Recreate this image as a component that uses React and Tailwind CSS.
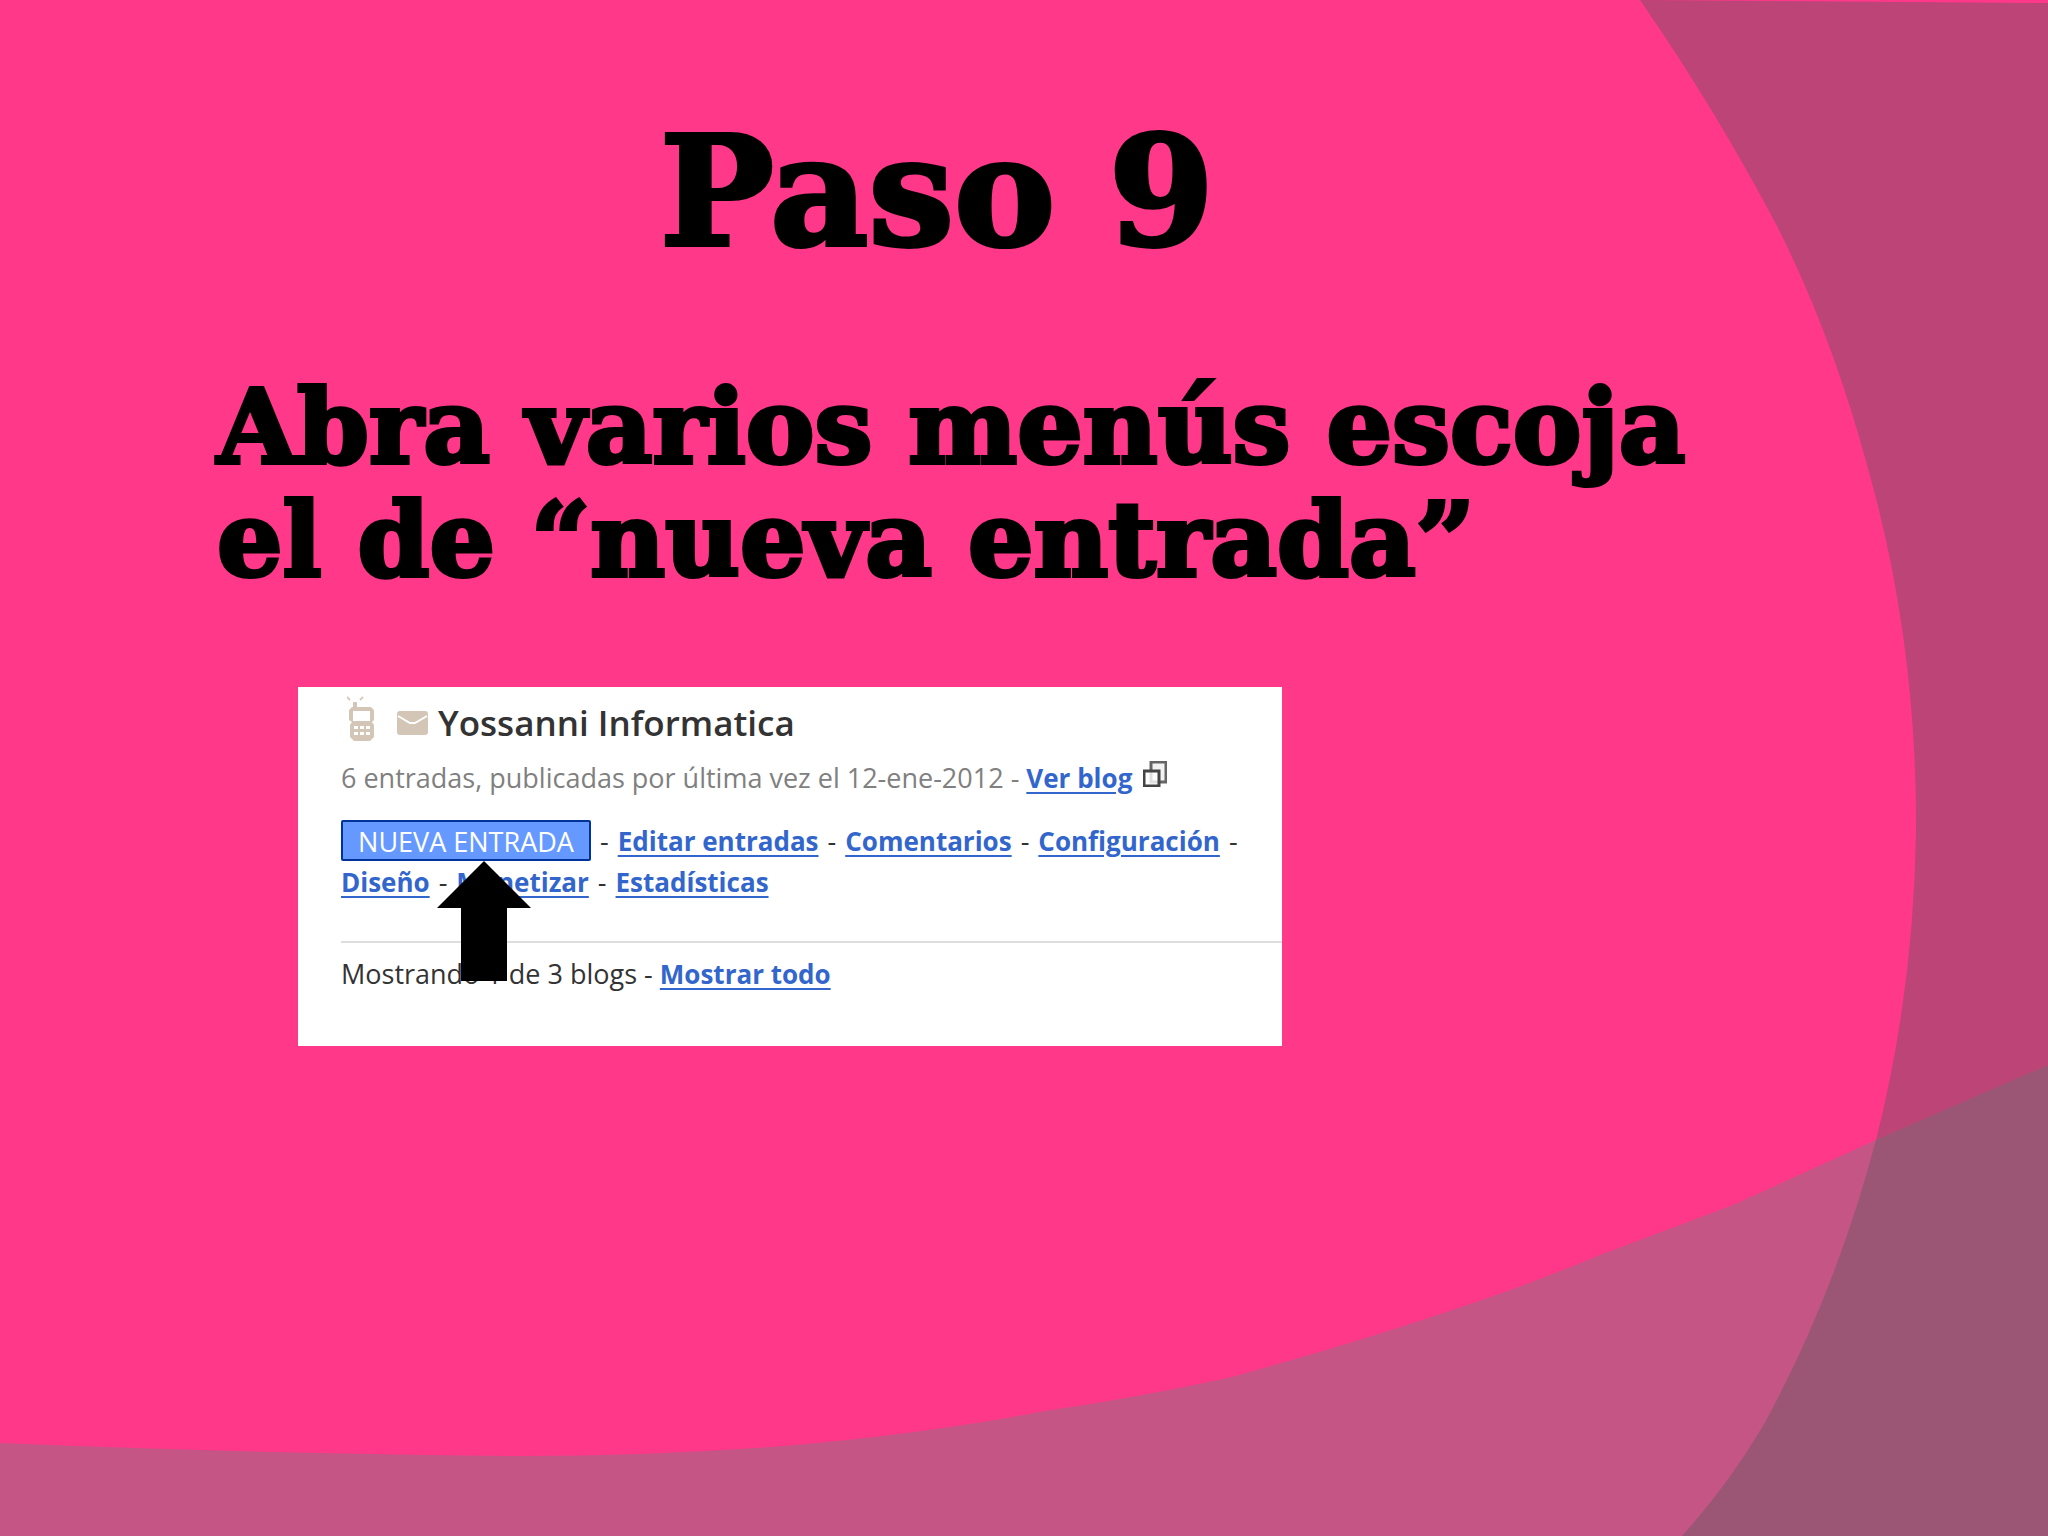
const moreLinks = ["Diseño", "Monetizar", "Estadísticas"];
const mainLinks = ["Editar entradas", "Comentarios", "Configuración"];

const sweep =
  "M0 1443 Q270 1454 522 1456 Q650 1456 784 1446 Q925 1434 1045 1411 Q1140 1397 1228 1378 Q1360 1342 1476 1302 Q1540 1280 1600 1255 L1733 1205 L1876 1140 L2048 1065 V1536 H0 Z";
const curve =
  "M1640 0 Q1716 110 1777 226 Q1832 335 1867 465 Q1917 640 1916 830 Q1914 990 1876 1140 Q1835 1295 1763 1426 Q1728 1485 1682 1536 H2048 V3 Z";

function Background() {
  return (
    <svg
      className="absolute inset-0 h-full w-full"
      viewBox="0 0 2048 1536"
      preserveAspectRatio="none"
      aria-hidden="true"
    >
      <defs>
        <clipPath id="curve-clip">
          <path d={curve} />
        </clipPath>
      </defs>
      <path d={curve} fill="#bd4477" />
      <path d={sweep} fill="#c55584" />
      <path d={sweep} fill="#9a5674" clipPath="url(#curve-clip)" />
    </svg>
  );
}

function PhoneIcon() {
  return (
    <svg className="h-[46px] w-7" viewBox="0 0 28 46" fill="none" aria-hidden="true">
      <path d="M0 1l3 3M16 1l-3 3" stroke="#d8cbbb" strokeWidth="2" />
      <path d="M6 6h4v6H6z" fill="#d3c6b6" />
      <path d="M5 11h19l3 3v10l-2 2 2 3v12l-4 4H7l-4-4V29l2-3-3-2V14z" fill="#d3c6b6" />
      <path d="M6 15h17v10H6z" fill="#fff" />
      <path
        d="M7 30h4v3H7zM13 30h4v3h-4zM19 30h4v3h-4zM7 36h4v3H7zM13 36h4v3h-4zM19 36h4v3h-4z"
        fill="#fff"
      />
    </svg>
  );
}

function MailIcon() {
  return (
    <svg className="h-6 w-8" viewBox="0 0 32 24" fill="none" aria-hidden="true">
      <rect width="31" height="24" rx="3" fill="#d3c6b6" />
      <path d="M1 5l12 7h5l12-7" stroke="#fff" strokeWidth="2" />
    </svg>
  );
}

function WindowsIcon() {
  return (
    <svg className="h-[26px] w-6" viewBox="0 0 24 26" fill="none" aria-hidden="true">
      <path d="M8 1h15v20H8z" fill="#f3f3f3" stroke="#666" strokeWidth="3" />
      <path d="M1 10h15v15H1z" fill="#fff" fillOpacity=".8" stroke="#444" strokeWidth="3" />
    </svg>
  );
}

function TextLink({ children }) {
  return (
    <a
      href="#"
      className="text-[26px] font-bold text-[#3366cc] underline decoration-2 underline-offset-4"
    >
      {children}
    </a>
  );
}

function BlogCard() {
  return (
    <section className="relative w-[984px] max-w-full bg-white pt-[13px] pb-[52px] pl-[43px] font-['Open_Sans',sans-serif] text-[27px] text-[#333]">
      <div className="flex h-[46px] items-center">
        <div className="w-14 pb-2 pl-1.5">
          <PhoneIcon />
        </div>
        <div className="w-[41px]">
          <MailIcon />
        </div>
        <h2 className="text-[35px] font-semibold">Yossanni Informatica</h2>
      </div>

      <div className="mt-3 flex h-10 items-center">
        <p className="text-[#808080]">
          6 entradas, publicadas por última vez el 12-ene-2012 -{" "}
          <TextLink>Ver blog</TextLink>
        </p>
        <span className="ml-[11px] pb-2">
          <WindowsIcon />
        </span>
      </div>

      <nav className="mt-[22px] leading-10">
        <div className="flex h-[41px] items-center gap-[9px]">
          <button
            type="button"
            className="h-[41px] w-[250px] rounded-xs border-2 border-[#003399] bg-[#6699ff] text-white"
          >
            NUEVA ENTRADA
          </button>
          <span>-</span>
          {mainLinks.map((label) => (
            <span key={label} className="flex gap-[9px]">
              <TextLink>{label}</TextLink>
              <span>-</span>
            </span>
          ))}
        </div>
        <div className="flex h-[41px] items-center gap-[9px]">
          {moreLinks.map((label, i) => (
            <span key={label} className="flex gap-[9px]">
              {i > 0 && <span>-</span>}
              <TextLink>{label}</TextLink>
            </span>
          ))}
        </div>
      </nav>

      <p className="mt-[39px] border-t-2 border-[#ddd] pt-[11px] leading-10">
        Mostrando 1 de 3 blogs - <TextLink>Mostrar todo</TextLink>
      </p>

      <svg
        className="absolute top-[174px] left-[139px] h-[120px] w-[94px]"
        viewBox="0 0 94 120"
        aria-hidden="true"
      >
        <path d="M47 0l47 47H70v73H24V47H0z" />
      </svg>
    </section>
  );
}

export default function App() {
  return (
    <main className="relative min-h-screen overflow-hidden bg-[#ff388a] text-black">
      <Background />
      <div className="relative pt-[104px] font-['Ravie','DejaVu_Serif',serif] font-bold [-webkit-text-stroke:4px_black]">
        <h1 className="pr-[276px] pl-[102px] text-center text-[152px] leading-[176px]">Paso 9</h1>
        <p className="mt-[90px] pl-[217px] text-[103px] leading-[113px]">
          Abra varios menús escoja
          <br />
          el de “nueva entrada”
        </p>
      </div>
      <div className="relative mt-[91px] pl-[298px]">
        <BlogCard />
      </div>
    </main>
  );
}
